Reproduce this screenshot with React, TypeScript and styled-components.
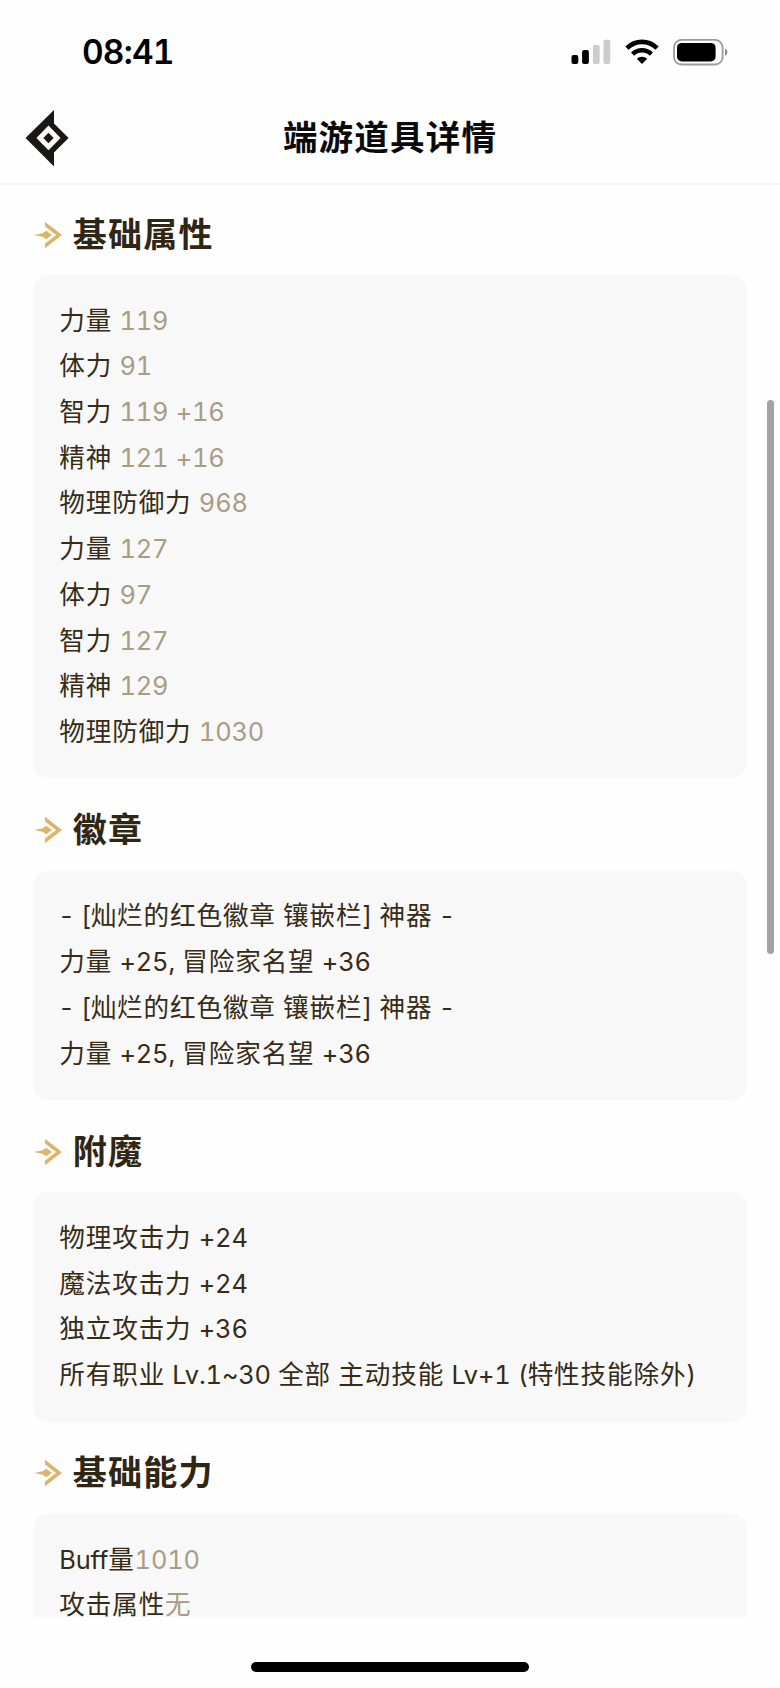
import React from "react";
import styled, { createGlobalStyle } from "styled-components";

const GlobalStyle = createGlobalStyle`
  * { box-sizing: border-box; }
  body {
    margin: 0;
    background: #fefefe;
    font-family: Inter, "Noto Sans CJK SC", sans-serif;
    font-variant-numeric: tabular-nums;
    font-variant-ligatures: none;
  }
`;

const Screen = styled.div`
  position: relative;
  display: flex;
  flex-direction: column;
  width: 780px;
  height: 1688px;
  overflow: hidden;
  background: #fefefe;
`;

const StatusBar = styled.header`
  display: flex;
  align-items: center;
  justify-content: space-between;
  height: 94px;
  padding: 10px 51px 0 82px;
`;

const Clock = styled.time`
  font-size: 33.5px;
  font-weight: 600;
  line-height: 40px;
  letter-spacing: -0.8px;
  color: #000;
`;

const StatusIcons = styled.div`
  display: flex;
  align-items: center;
  gap: 14px;
  height: 28px;
`;

const NavBar = styled.nav`
  display: grid;
  grid-template-columns: 70px 1fr 70px;
  align-items: center;
  height: 91px;
  padding: 0 25px 2px;
  border-bottom: 2px solid #f7f7f7;
`;

const BackButton = styled.button`
  display: flex;
  width: 44px;
  height: 58px;
  padding: 0;
  border: 0;
  background: none;
`;

const PageTitle = styled.h1`
  margin: 0;
  font-size: 34.5px;
  font-weight: 700;
  line-height: 48px;
  letter-spacing: 1.2px;
  text-align: center;
  color: #0a0a0a;
`;

const Content = styled.main`
  display: flex;
  flex-direction: column;
  height: 1432px;
  padding: 0 33.3px;
  overflow: hidden;
`;

const Section = styled.section`
  flex: none;
`;

const SectionHeader = styled.div<{ $first?: boolean }>`
  display: flex;
  align-items: center;
  gap: 9.5px;
  height: ${(p) => (p.$first ? 90 : 92.3)}px;
  padding-top: ${(p) => (p.$first ? 9 : 11)}px;
`;

const SectionTitle = styled.h2`
  margin: 0;
  font-size: 34px;
  font-weight: 700;
  line-height: 48px;
  letter-spacing: 1.2px;
  color: #2f2614;
`;

const Card = styled.div`
  padding: 22.7px 26px 23.9px;
  border-radius: 15px;
  background: #f8f8f8;
`;

const Row = styled.div`
  height: 45.7px;
  font-size: 25.6px;
  line-height: 45.7px;
  letter-spacing: 0.85px;
  white-space: pre;
  color: #352b17;
`;

const Latin = styled.span`
  font-size: 25.4px;
  letter-spacing: -0.15px;
  word-spacing: 0.6px;
`;

const Dash = styled.span`
  margin: 0 -1px;
`;

const Value = styled.span`
  color: #a89c84;
`;

const ScrollThumb = styled.div`
  position: absolute;
  top: 400px;
  right: 6px;
  width: 7px;
  height: 554px;
  border-radius: 4px;
  background: #a3a3a3;
`;

const HomeArea = styled.footer`
  display: flex;
  justify-content: center;
  padding-top: 44.5px;
`;

const HomeIndicator = styled.div`
  width: 278px;
  height: 10px;
  border-radius: 5px;
  background: #000;
`;

const SignalIcon = () => (
  <svg width="40" height="26" viewBox="0 0 40 26">
    <rect x="0.5" y="16" width="6.8" height="9" rx="2" fill="#000" />
    <rect x="11.1" y="11" width="6.8" height="14" rx="2" fill="#000" />
    <rect x="21.9" y="6" width="6.8" height="19" rx="2" fill="#ccc" />
    <rect x="32.5" y="0.7" width="6.8" height="24.3" rx="2" fill="#ccc" />
  </svg>
);

const WifiIcon = () => (
  <svg width="34" height="26" viewBox="0 0 34 26">
    <g fill="none" stroke="#000" strokeWidth="4.6">
      <path d="M1.9 9.2C10.2 0.8 23.8 0.8 32.1 9.2" />
      <path d="M7.6 15.2C12.8 10 21.2 10 26.4 15.2" />
    </g>
    <path d="M11.8 19.8C14.7 17 19.3 17 22.2 19.8L17 25Z" fill="#000" />
  </svg>
);

const BatteryIcon = () => (
  <svg width="56" height="28" viewBox="0 0 56 28">
    <rect x="1" y="1.9" width="48.6" height="24.6" rx="7.6" fill="none" stroke="#9b9b9b" strokeWidth="1.8" />
    <rect x="4" y="4.9" width="38.6" height="18.6" rx="4.8" fill="#000" />
    <path d="M52 10.5C55.2 12 55.2 16.4 52 17.9Z" fill="#8d8d8d" />
  </svg>
);

const BackIcon = () => (
  <svg width="44" height="58" viewBox="0 0 44 58">
    <path
      fillRule="evenodd"
      fill="#1b1713"
      d="M29 1V14.4L43.6 29L29 43.6V57.5L0.5 29ZM23.5 16.5L11.4 29L23.5 41.2L35.6 29Z"
    />
    <path d="M23.5 23.8L28.7 29L23.5 34.2L18.3 29Z" fill="#1b1713" />
  </svg>
);

const ArrowIcon = () => (
  <svg width="30" height="28" viewBox="0 0 30 28">
    <path d="M12 0.8L29 14L12 27.2V22.6L23.2 14L12 5.4Z" fill="#dcb56b" />
    <path d="M1 14L9.6 12.2L13.3 9.8L19 14L13.3 18.2L9.6 15.8Z" fill="#dcb56b" />
  </svg>
);

// Latin letters, digits and punctuation are set tighter than the Chinese text.
const MixedText = ({ text }: { text: string }) => (
  <>
    {text
      .split(/(-|[\x20-\x2c\x2e-\x7e]+)/)
      .filter(Boolean)
      .map((run, i) => {
        if (run === "-") return <Latin as={Dash} key={i}>{run}</Latin>;
        if (/^[\x20-\x7e]/.test(run)) return <Latin key={i}>{run}</Latin>;
        return <React.Fragment key={i}>{run}</React.Fragment>;
      })}
  </>
);

type Line = { label: string; value?: string };
type SectionData = { title: string; lines: Line[] };

const sections: SectionData[] = [
  {
    title: "基础属性",
    lines: [
      { label: "力量 ", value: "119" },
      { label: "体力 ", value: "91" },
      { label: "智力 ", value: "119 +16" },
      { label: "精神 ", value: "121 +16" },
      { label: "物理防御力 ", value: "968" },
      { label: "力量 ", value: "127" },
      { label: "体力 ", value: "97" },
      { label: "智力 ", value: "127" },
      { label: "精神 ", value: "129" },
      { label: "物理防御力 ", value: "1030" },
    ],
  },
  {
    title: "徽章",
    lines: [
      { label: "- [灿烂的红色徽章 镶嵌栏] 神器 -" },
      { label: "力量 +25, 冒险家名望 +36" },
      { label: "- [灿烂的红色徽章 镶嵌栏] 神器 -" },
      { label: "力量 +25, 冒险家名望 +36" },
    ],
  },
  {
    title: "附魔",
    lines: [
      { label: "物理攻击力 +24" },
      { label: "魔法攻击力 +24" },
      { label: "独立攻击力 +36" },
      { label: "所有职业 Lv.1~30 全部 主动技能 Lv+1 (特性技能除外)" },
    ],
  },
  {
    title: "基础能力",
    lines: [
      { label: "Buff量", value: "1010" },
      { label: "攻击属性", value: "无" },
    ],
  },
];

export default function App() {
  return (
    <Screen lang="zh-CN">
      <GlobalStyle />
      <StatusBar>
        <Clock>08:41</Clock>
        <StatusIcons>
          <SignalIcon />
          <WifiIcon />
          <BatteryIcon />
        </StatusIcons>
      </StatusBar>
      <NavBar>
        <BackButton aria-label="返回">
          <BackIcon />
        </BackButton>
        <PageTitle>端游道具详情</PageTitle>
      </NavBar>
      <Content>
        {sections.map((section, i) => (
          <Section key={section.title}>
            <SectionHeader $first={i === 0}>
              <ArrowIcon />
              <SectionTitle>{section.title}</SectionTitle>
            </SectionHeader>
            <Card>
              {section.lines.map((line, j) => (
                <Row key={j}>
                  <MixedText text={line.label} />
                  {line.value && (
                    <Value>
                      <MixedText text={line.value} />
                    </Value>
                  )}
                </Row>
              ))}
            </Card>
          </Section>
        ))}
      </Content>
      <HomeArea>
        <HomeIndicator />
      </HomeArea>
      <ScrollThumb />
    </Screen>
  );
}
